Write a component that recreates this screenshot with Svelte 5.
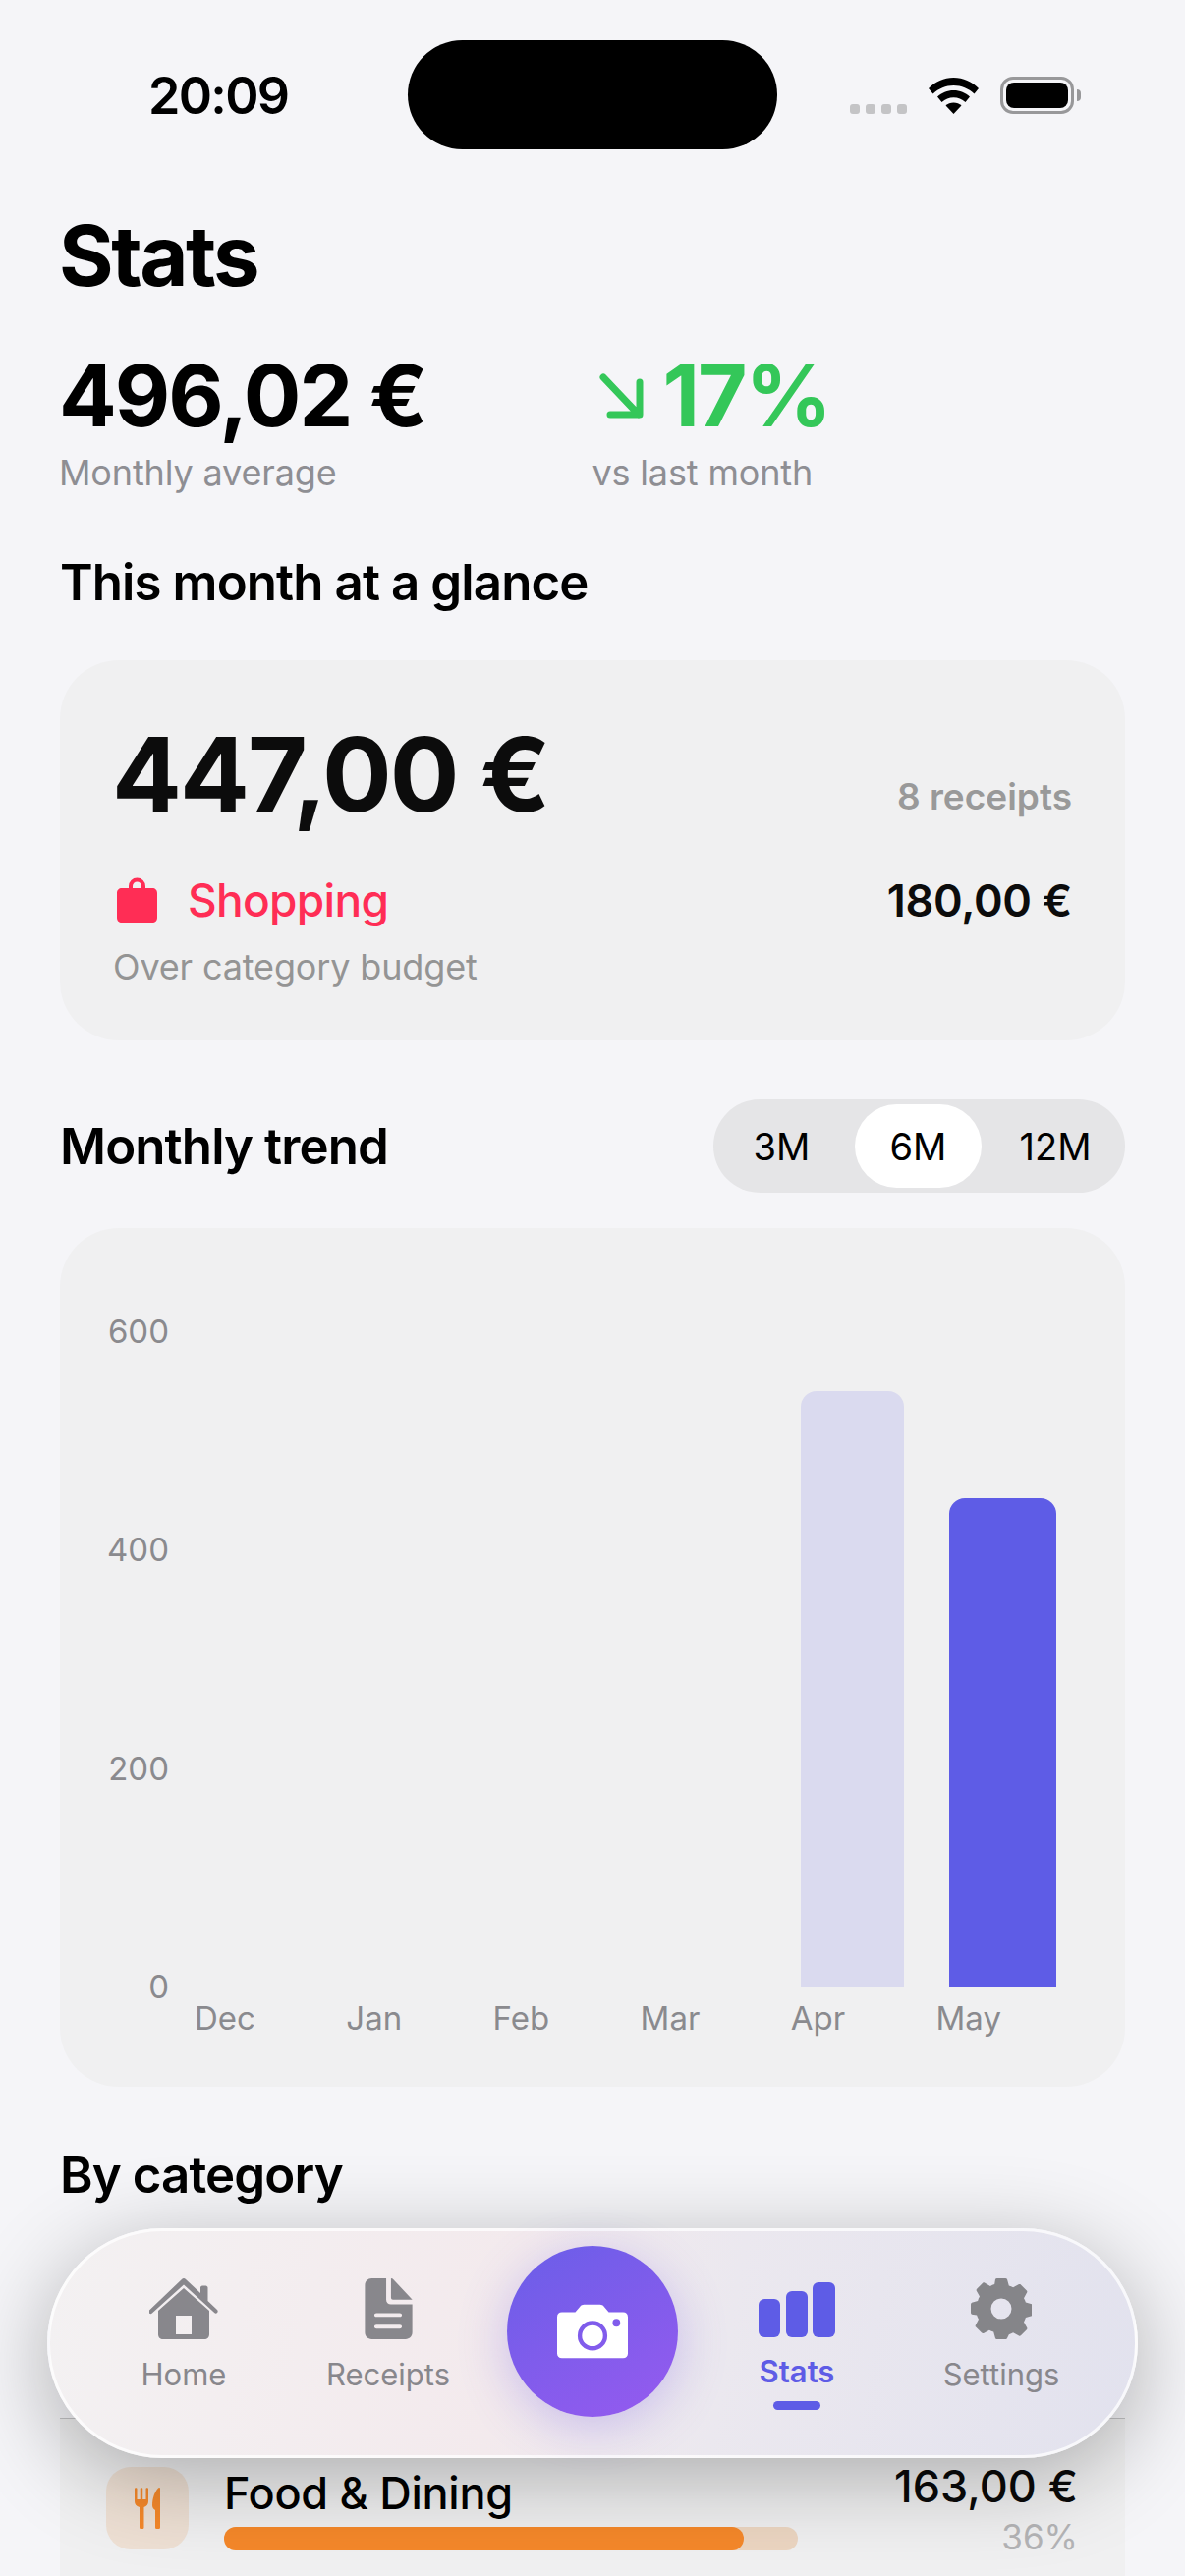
<script>
  const yTicks = [600, 400, 200, 0];
  const months = ['Dec', 'Jan', 'Feb', 'Mar', 'Apr', 'May'];
  const pxPerEuro = 667 / 600;
  const bars = [
    { month: 'Apr', value: 545, current: false },
    { month: 'May', value: 447, current: true }
  ];
  const ranges = ['3M', '6M', '12M'];
  let range = $state('6M');
</script>

<div class="screen">
  <div class="status">
    <span class="time">20:09</span>
    <div class="island"></div>
    <div class="status-right">
      <div class="dots"><i></i><i></i><i></i><i></i></div>
      <svg class="wifi" viewBox="0 0 51 37" width="51" height="37">
        <path d="M25.5 0C15.5 0 7 4 0 11l4.500 5.500C10.500 11 17.500 8 25.500 8s15 3 21 8.500L51 11C44 4 35.500 0 25.500 0z"/>
        <path d="M25.500 13c-6.500 0-12 2.500-16.500 6.500l4.500 5.500c3.500-3 7.500-4.800 12-4.800s8.500 1.800 12 4.800l4.500-5.500C37.500 15.500 32 13 25.500 13z"/>
        <path d="M25.500 25.500c-3.200 0-6 1.200-8 3L25.500 37l8-8.500c-2-1.800-4.800-3-8-3z"/>
      </svg>
      <div class="battery"><div class="battery-fill"></div></div>
    </div>
  </div>

  <main class="content">
    <h1>Stats</h1>

    <div class="summary">
      <div class="summary-col">
        <div class="amount">496,02 €</div>
        <div class="muted">Monthly average</div>
      </div>
      <div class="summary-col change-col">
        <div class="amount change">
          <svg viewBox="0 0 46 46" width="46" height="46" fill="none" stroke="#34c759" stroke-width="7" stroke-linecap="round" stroke-linejoin="round">
            <path d="M4 4l36 38M41 9v33H11"/>
          </svg>
          17%
        </div>
        <div class="muted">vs last month</div>
      </div>
    </div>

    <h2 class="glance-title">This month at a glance</h2>

    <section class="card glance">
      <div class="glance-top">
        <span class="big">447,00 €</span>
        <span class="receipts">8 receipts</span>
      </div>
      <div class="glance-row">
        <span class="cat-name">
          <svg viewBox="0 0 41 46" width="41" height="46">
            <path fill="#ff2d55" d="M12 11V9a8.500 8.500 0 0 1 17 0v2h7c3 0 5 2 5 5v25c0 3-2 5-5 5H5c-3 0-5-2-5-5V16c0-3 2-5 5-5h7zm4 0h9V9a4.500 4.500 0 0 0-9 0v2z"/>
          </svg>
          Shopping
        </span>
        <span class="cat-amount">180,00 €</span>
      </div>
      <div class="muted">Over category budget</div>
    </section>

    <div class="trend-head">
      <h2>Monthly trend</h2>
      <div class="segmented">
        {#each ranges as r}
          <button class:active={r === range} onclick={() => (range = r)}>{r}</button>
        {/each}
      </div>
    </div>

    <section class="card chart">
      <div class="y-axis">
        {#each yTicks as t}
          <span>{t}</span>
        {/each}
      </div>
      <div class="plot">
        <div class="bars">
          {#each bars as b}
            <div class="bar" class:current={b.current} style="height:{b.value * pxPerEuro}px"></div>
          {/each}
        </div>
        <div class="x-axis">
          {#each months as m}
            <span>{m}</span>
          {/each}
        </div>
      </div>
    </section>

    <h2 class="cat-title">By category</h2>

    <section class="cat-card">
      <div class="cat-row">
        <div class="tile">
          <svg viewBox="0 0 26 42" width="26" height="42" fill="#f5882a">
            <path d="M0 1.200c0-1.300 2.500-1.300 2.500 0V12h3.250V1.200c0-1.300 2.500-1.300 2.500 0V12h3.250V1.200c0-1.300 2.500-1.300 2.500 0V14c0 3-1.500 5-4.500 6v20.500c0 2.500-4.500 2.500-4.500 0V20C1.500 19 0 17 0 14z"/>
            <path d="M26 1.200c0-1.200-1.200-1.500-2-.6-3 3.500-6 9-6 17.400 0 2 1 4 3 5v17.500c0 2.500 5 2.500 5 0z"/>
          </svg>
        </div>
        <div class="cat-main">
          <div class="cat-label">Food &amp; Dining</div>
          <div class="progress"><div class="progress-fill" style="width:{(529 / 584) * 100}%"></div></div>
        </div>
        <div class="cat-values">
          <div class="cat-total">163,00 €</div>
          <div class="cat-pct">36%</div>
        </div>
      </div>
    </section>
  </main>

  <nav class="tabbar">
    <div class="tab">
      <svg viewBox="0 0 70 62" width="70" height="62">
        <path fill="#88878c" fill-rule="evenodd" d="M9 29L35 6l26 23v28c0 3-2 5-5 5H14c-3 0-5-2-5-5zM27 38v19h16V38z"/>
        <path fill="#f2eef0" d="M35 4.500L6 30l3 3L35 10l26 23 3-3z"/>
        <path fill="#88878c" d="M33 .9c1.200-1.200 2.800-1.200 4 0l15 14V9.500c0-1 .8-2 2-2h3.500c1 0 2 1 2 2v13.500l9.500 9c2 2-.8 5-2.800 3L35 6.500 2.800 35.500c-2 2-4.800-1-2.800-3z"/>
      </svg>
      <span>Home</span>
    </div>
    <div class="tab">
      <svg viewBox="0 0 49 63" width="49" height="63">
        <path fill="#88878c" fill-rule="evenodd" d="M7 0h15v22c0 3 2 5 5 5h22v29c0 4-3 7-7 7H7c-4 0-7-3-7-7V7c0-4 3-7 7-7zm5 36c-3 0-3 4 0 4h24c3 0 3-4 0-4zm0 12c-3 0-3 4 0 4h24c3 0 3-4 0-4z"/>
        <path fill="#88878c" d="M27 0c1 0 1.800.5 2.500 1.200L49 22v0H29c-1.200 0-2-.8-2-2z"/>
      </svg>
      <span>Receipts</span>
    </div>
    <div class="tab camera-slot">
      <button class="camera" aria-label="Scan receipt">
        <svg viewBox="0 0 74 56" width="72" height="56">
          <path fill="#fff" fill-rule="evenodd" d="M5 8h14l5-6c1-1.300 2.500-2 4-2h17c1.500 0 3 .7 4 2l5 6h15c3 0 5 2 5 5v38c0 3-2 5-5 5H5c-3 0-5-2-5-5V13c0-3 2-5 5-5zm32 9a15.500 15.500 0 1 0 0 31 15.500 15.500 0 0 0 0-31zm0 4.500a11 11 0 1 1 0 22 11 11 0 0 1 0-22zM62 15a4 4 0 1 0 0 8 4 4 0 0 0 0-8z"/>
        </svg>
      </button>
    </div>
    <div class="tab active">
      <svg viewBox="0 0 78 56" width="78" height="56" fill="#5e5ce6">
        <rect x="0" y="17" width="22" height="39" rx="6"/>
        <rect x="28" y="9" width="22" height="47" rx="6"/>
        <rect x="55" y="0" width="23" height="56" rx="6"/>
      </svg>
      <span>Stats</span>
      <i class="indicator"></i>
    </div>
    <div class="tab">
      <svg viewBox="0 0 62 62" width="62" height="62">
        <path fill="#858589" fill-rule="evenodd" d="M25 1c.3-.6 1-1 1.700-1h8.600c.7 0 1.400.4 1.700 1l1.800 6.400c1.500.5 3 1.100 4.300 1.900l5.900-3.200c.6-.3 1.400-.2 1.900.3l6 6c.5.500.6 1.300.3 1.900l-3.200 5.900c.8 1.400 1.400 2.800 1.900 4.300l6.100 1.800c.6.300 1 1 1 1.700v8.600c0 .7-.4 1.400-1 1.700l-6.100 1.800c-.5 1.500-1.100 3-1.900 4.300l3.200 5.900c.3.600.2 1.400-.3 1.900l-6 6c-.5.500-1.300.6-1.900.3l-5.900-3.200c-1.400.8-2.800 1.400-4.300 1.900L37 61c-.3.600-1 1-1.700 1h-8.600c-.7 0-1.400-.4-1.700-1l-1.800-6.400c-1.500-.5-3-1.100-4.300-1.900l-5.900 3.200c-.6.300-1.400.2-1.900-.3l-6-6c-.5-.5-.6-1.300-.3-1.900l3.200-5.900c-.8-1.400-1.400-2.800-1.900-4.300L1 36.700c-.6-.3-1-1-1-1.700v-8.600c0-.7.4-1.400 1-1.700l6.100-1.800c.5-1.500 1.100-3 1.900-4.300l-3.200-5.900c-.3-.6-.2-1.400.3-1.900l6-6c.5-.5 1.300-.6 1.900-.3L19.900 8c1.400-.8 2.800-1.400 4.300-1.900zM31 20.500a10.500 10.500 0 1 0 0 21 10.500 10.500 0 0 0 0-21z"/>
      </svg>
      <span>Settings</span>
    </div>
  </nav>
</div>

<style>
  :global(body) { margin: 0; background: #f5f5f8; }
  .screen {
    position: relative;
    width: 1206px;
    height: 2622px;
    overflow: hidden;
    background: #f5f5f8;
    font-family: Inter, "Liberation Sans", sans-serif;
    color: #000;
  }

  .status { position: relative; height: 219px; }
  .time { position: absolute; left: 151px; top: 68px; font-size: 52px; line-height: 60px; font-weight: 600; letter-spacing: -1.7px; }
  .island { position: absolute; left: 415px; top: 41px; width: 376px; height: 111px; border-radius: 56px; background: #000; }
  .status-right { position: absolute; left: 865px; top: 78px; display: flex; align-items: flex-end; height: 38px; }
  .dots { display: flex; gap: 6px; }
  .dots i { width: 10px; height: 10px; border-radius: 3px; background: #c4c4c6; }
  .wifi { margin-left: 22px; display: block; }
  .battery { position: relative; margin-left: 22px; width: 75px; height: 38px; box-sizing: border-box; border: 3px solid #98989a; border-radius: 13px; padding: 3px; }
  .battery::after { content: ""; position: absolute; right: -10px; top: 10px; width: 4px; height: 12px; background: #98989a; border-radius: 0 4px 4px 0; }
  .battery-fill { width: 100%; height: 100%; background: #000; border-radius: 8px; }

  .content { padding: 0 61px; }
  h1 { margin: 0 0 0 -1px; font-size: 85px; line-height: 84px; font-weight: 700; letter-spacing: -2.5px; }
  h2 { margin: 0; font-size: 51px; line-height: 60px; font-weight: 600; letter-spacing: -.9px; }

  .summary { display: flex; margin-top: 52px; }
  .summary-col { display: flex; flex-direction: column; }
  .change-col { margin-left: 170px; }
  .amount { font-size: 87px; line-height: 96px; font-weight: 700; letter-spacing: -2px; white-space: nowrap; margin-left: -1px; }
  .change { display: flex; align-items: center; gap: 18px; color: #34c759; padding-left: 8px; }
  .muted { font-size: 36px; line-height: 44px; color: #8e8e93; letter-spacing: -.15px; }
  .summary .muted { margin-top: 8px; margin-left: -1px; }

  .glance-title { margin-top: 60px; }

  .card { background: #f0f0f1; border-radius: 60px; }
  .glance { margin-top: 49px; height: 387px; box-sizing: border-box; padding: 57px 54px 0; }
  .glance-top { display: flex; justify-content: space-between; align-items: flex-end; height: 118px; }
  .big { font-size: 105px; line-height: 118px; font-weight: 700; letter-spacing: -2px; color: #0c0c0c; margin-left: -1px; }
  .receipts { font-size: 37px; line-height: 44px; font-weight: 600; color: #999; margin-bottom: 14px; }
  .glance-row { display: flex; justify-content: space-between; align-items: center; margin-top: 39px; height: 60px; }
  .cat-name { display: flex; align-items: center; gap: 31px; color: #ff2d55; font-size: 46px; font-weight: 500; letter-spacing: -.7px; }
  .cat-name svg { margin-left: 4px; }
  .cat-amount { font-size: 45px; font-weight: 600; letter-spacing: -.3px; color: #0c0c0c; }
  .glance .muted { margin-top: 16px; color: #949494; }

  .trend-head { display: flex; justify-content: space-between; align-items: center; margin-top: 60px; }
  .segmented { display: flex; align-items: center; width: 419px; height: 95px; box-sizing: border-box; padding: 5px; background: #e5e5e7; border-radius: 48px; }
  .segmented button { height: 85px; border: 0; border-radius: 43px; background: none; font: 400 38px Inter, sans-serif; color: #000; padding: 0; }
  .segmented button:first-child { flex: 0 0 139px; padding-right: 10px; }
  .segmented button:last-child { flex: 1; padding-left: 9px; }
  .segmented button.active { background: #fff; flex: 0 0 129px; }

  .chart { position: relative; margin-top: 36px; height: 874px; box-sizing: border-box; display: flex; padding: 84px 70px 0 0; }
  .y-axis { display: flex; flex-direction: column; justify-content: space-between; align-items: flex-end; width: 111px; height: 709px; }
  .y-axis span { font-size: 33px; line-height: 42px; color: #8a8a8e; }
  .plot { flex: 1; display: flex; flex-direction: column; }
  .bars { display: flex; align-items: flex-end; justify-content: flex-end; gap: 46px; height: 688px; }
  .bar { width: 105px; background: #dadaef; border-radius: 16px 16px 0 0; }
  .bar.current { width: 109px; background: #5e5ce6; }
  .x-axis { display: flex; justify-content: space-between; padding: 11px 56px 0 26px; }
  .x-axis span { font-size: 33px; line-height: 42px; color: #8a8a8e; }

  .cat-title { margin-top: 60px; }
  .cat-card {
    margin-top: 217px;
    height: 400px;
    background: #f0f0f1;
    border-top: 1px solid #c4c4c6;
  }
  .cat-row { display: flex; align-items: flex-start; padding: 49px 48px 0 47px; }
  .tile { width: 84px; height: 84px; border-radius: 25px; flex: none; display: flex; align-items: center; justify-content: center; background: #eee0d4; }
  .cat-main { width: 584px; margin-left: 36px; }
  .cat-label { font-size: 45px; line-height: 54px; font-weight: 500; letter-spacing: -.3px; }
  .progress { height: 24px; margin-top: 7px; border-radius: 12px; background: #ecd6c2; }
  .progress-fill { height: 100%; background: #f5882a; border-radius: 12px; }
  .cat-values { margin-left: auto; text-align: right; margin-top: -5px; }
  .cat-total { font-size: 45px; line-height: 50px; font-weight: 500; color: #0a0a0a; }
  .cat-pct { font-size: 35px; line-height: 44px; margin-top: 4px; color: #b4b4b6; }

  .tabbar {
    position: absolute;
    left: 48px;
    top: 2268px;
    width: 1110px;
    height: 234px;
    box-sizing: border-box;
    padding: 0 32px;
    display: grid;
    grid-template-columns: repeat(5, 208px);
    border: 3px solid rgba(255, 255, 255, .75);
    border-radius: 117px;
    background: linear-gradient(100deg, #f3f1f2 0%, #f3eaed 42%, #ebe8ef 62%, #e2e2ee 100%);
    box-shadow: 0 20px 90px rgba(0, 0, 0, .29);
  }
  .tab { display: flex; flex-direction: column; align-items: center; padding-top: 48px; position: relative; }
  .tab svg { display: block; height: 62px; }
  .tab span { font-size: 31px; line-height: 40px; color: #88878c; margin-top: 16px; }
  .tab.active span { color: #5e5ce6; font-weight: 600; margin-top: 15px; }
  .tab.active svg { height: 56px; margin-top: 4px; }
  .indicator { position: absolute; top: 173px; width: 48px; height: 9px; border-radius: 5px; background: #5e5ce6; }
  .camera-slot { padding-top: 15px; }
  .camera {
    width: 174px;
    height: 174px;
    padding: 0;
    border: 0;
    border-radius: 50%;
    display: flex;
    align-items: center;
    justify-content: center;
    background: linear-gradient(150deg, #6a5ee8, #965aef);
    box-shadow: 0 10px 50px rgba(110, 85, 230, .3);
  }
  .camera svg { height: 56px; }
</style>
